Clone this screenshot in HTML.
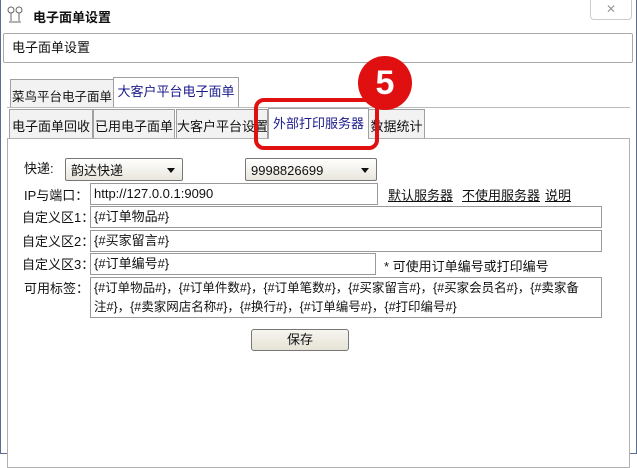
<!DOCTYPE html>
<html><head><meta charset="utf-8"><style>
*{box-sizing:border-box}
body{margin:0;width:637px;height:454px;overflow:hidden;background:#fff;font-family:"Liberation Sans","Noto Sans CJK SC",sans-serif;font-size:12px;color:#111;position:relative}
.a{position:absolute;white-space:nowrap}
.win{left:0;top:0;width:637px;height:454px;border:1px solid #5a6d8c;border-top:none}
.inp{position:absolute;border:1px solid #999;background:#fff;height:22px;line-height:20px;padding-left:3px;font-size:13px;white-space:nowrap}
.tab{position:absolute;border:1px solid #a0a0a0;border-bottom:none;background:#f2f2f2;font-size:13px;text-align:center;white-space:nowrap;overflow:hidden}
.sel{position:absolute;border:1px solid #777;border-radius:2px;background:linear-gradient(#fff,#e8e6dc);height:23px;line-height:23px;padding-left:5px;font-size:13px}
.sel:after{content:"";position:absolute;right:7px;top:9px;border:4px solid transparent;border-top:5px solid #111}
a{color:#111;text-decoration:underline}
</style></head><body>
<div class="a win"></div>
<svg class="a" style="left:6px;top:5px" width="18" height="20"><circle cx="5" cy="5" r="3" fill="none" stroke="#666"/><circle cx="13" cy="5" r="3" fill="none" stroke="#666"/><path d="M5 8v8M13 8v8M3 17h12" stroke="#666" fill="none"/></svg>
<div class="a" style="left:33px;top:7px;font-size:13px;font-weight:bold">电子面单设置</div>
<div class="a" style="left:590px;top:0;width:42px;height:20px;border:1px solid #ccc;border-top:none;border-radius:0 0 4px 4px;color:#999;text-align:center;line-height:18px">✕</div>
<div class="a" style="left:3px;top:33px;width:630px;height:30px;border:1px solid #aaa;border-radius:2px;line-height:27px;padding-left:8px;font-size:13px">电子面单设置</div>
<div class="tab" style="left:10px;top:79px;width:104px;height:29px;line-height:34px;font-size:12.5px">菜鸟平台电子面单</div>
<div class="tab" style="left:113px;top:77px;width:126px;height:31px;background:#fff;color:#1a1a8c;line-height:28px">大客户平台电子面单</div>
<div class="a" style="left:7px;top:107px;width:623px;height:1px;background:#bbb"></div>
<div class="tab" style="left:9px;top:109px;width:84px;height:29px;line-height:34px">电子面单回收</div>
<div class="tab" style="left:93px;top:109px;width:82px;height:29px;line-height:34px">已用电子面单</div>
<div class="tab" style="left:176px;top:109px;width:92px;height:29px;line-height:34px">大客户平台设置</div>
<div class="tab" style="left:268px;top:108px;width:101px;height:31px;background:#fff;color:#1a1a8c;z-index:2;line-height:30px">外部打印服务器</div>
<div class="tab" style="left:368px;top:109px;width:57px;height:29px;line-height:34px">数据统计</div>
<div class="a" style="left:7px;top:138px;width:623px;height:330px;border:1px solid #b0b0b0;background:#fff"></div>
<div class="a" style="left:254px;top:98px;width:125px;height:52px;border:4px solid #e01010;border-radius:10px;z-index:3"></div>
<div class="a" style="left:358px;top:56px;width:54px;height:54px;border-radius:50%;background:#e01010;color:#fff;font-weight:bold;font-size:34px;text-align:center;line-height:54px;z-index:4">5</div>
<div class="a" style="left:24px;top:158px;font-size:13px">快递:</div>
<div class="sel" style="left:65px;top:158px;width:118px">韵达快递</div>
<div class="sel" style="left:245px;top:158px;width:132px">9998826699</div>
<div class="a" style="left:24px;top:185px;font-size:13px">IP与端口：</div>
<div class="inp" style="left:90px;top:183px;width:288px">http://127.0.0.1:9090</div>
<div class="a" style="left:388px;top:185px;font-size:13px"><a>默认服务器</a></div>
<div class="a" style="left:462px;top:185px;font-size:13px"><a>不使用服务器</a></div>
<div class="a" style="left:545px;top:185px;font-size:13px"><a>说明</a></div>
<div class="a" style="left:22px;top:207px;font-size:13px">自定义区1：</div>
<div class="inp" style="left:90px;top:206px;width:512px">{#订单物品#}</div>
<div class="a" style="left:22px;top:231px;font-size:13px">自定义区2：</div>
<div class="inp" style="left:90px;top:230px;width:512px">{#买家留言#}</div>
<div class="a" style="left:22px;top:254px;font-size:13px">自定义区3：</div>
<div class="inp" style="left:90px;top:253px;width:286px">{#订单编号#}</div>
<div class="a" style="left:384px;top:256px;font-size:13px">* 可使用订单编号或打印编号</div>
<div class="a" style="left:24px;top:278px;font-size:13px">可用标签：</div>
<div class="inp" style="left:90px;top:277px;width:512px;height:41px;line-height:19px;padding:1px 20px 0 3px;white-space:normal;font-size:12.5px">{#订单物品#}，{#订单件数#}，{#订单笔数#}，{#买家留言#}，{#买家会员名#}，{#卖家备注#}，{#卖家网店名称#}，{#换行#}，{#订单编号#}，{#打印编号#}</div>
<div class="a" style="left:251px;top:329px;width:98px;height:22px;border:1px solid #777;border-radius:3px;background:linear-gradient(#f6f5ef,#e6e3d6);text-align:center;line-height:20px;font-size:13px">保存</div>
</body></html>
